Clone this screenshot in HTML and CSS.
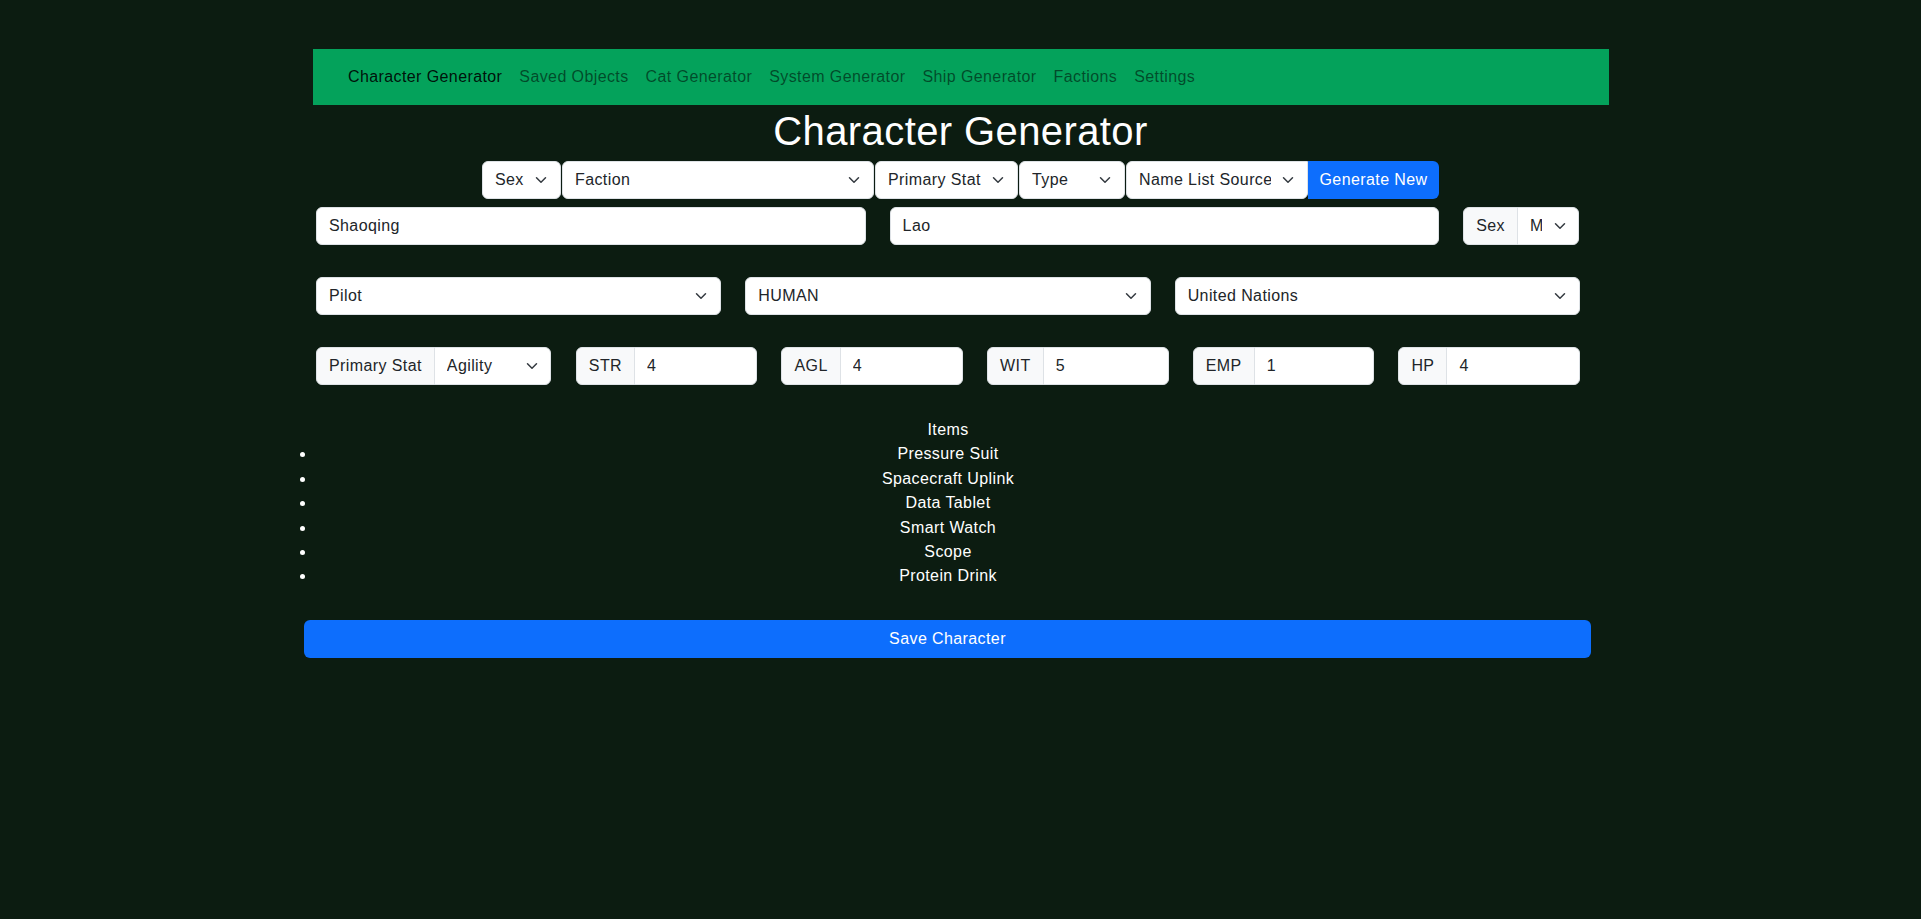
FILE: index.html
```html
<!DOCTYPE html>
<html lang="en">
<head>
    <meta charset="UTF-8">
    <title>Character Generator</title>
    <link rel="stylesheet" href="styles.css">
</head>
<body>
<svg class="defs" width="0" height="0">
    <symbol id="chev" viewBox="0 0 16 16">
        <path d="m2 5 6 6 6-6" fill="none" stroke="#343a40" stroke-width="2" stroke-linecap="round" stroke-linejoin="round"/>
    </symbol>
</svg>
<div class="container">
    <nav class="navbar">
        <a class="nav-link active" href="#">Character Generator</a>
        <a class="nav-link" href="#">Saved Objects</a>
        <a class="nav-link" href="#">Cat Generator</a>
        <a class="nav-link" href="#">System Generator</a>
        <a class="nav-link" href="#">Ship Generator</a>
        <a class="nav-link" href="#">Factions</a>
        <a class="nav-link" href="#">Settings</a>
    </nav>

    <h1 class="title">Character Generator</h1>

    <div class="toolbar">
        <span class="select-wrap w-sex">
            <select><option>Sex</option></select>
            <svg class="chev"><use href="#chev"/></svg>
        </span>
        <span class="select-wrap w-faction">
            <select><option>Faction</option></select>
            <svg class="chev"><use href="#chev"/></svg>
        </span>
        <span class="select-wrap w-primary">
            <select><option>Primary Stat</option></select>
            <svg class="chev"><use href="#chev"/></svg>
        </span>
        <span class="select-wrap w-type">
            <select><option>Type</option></select>
            <svg class="chev"><use href="#chev"/></svg>
        </span>
        <span class="select-wrap w-names">
            <select><option>Name List Source</option></select>
            <svg class="chev"><use href="#chev"/></svg>
        </span>
        <button class="btn btn-generate">Generate New</button>
    </div>

    <div class="sheet">
        <div class="row names">
            <input class="field" type="text" value="Shaoqing">
            <input class="field" type="text" value="Lao">
            <div class="group">
                <span class="group-label">Sex</span>
                <span class="select-wrap w-m">
                    <select><option>M</option><option>F</option></select>
                    <svg class="chev"><use href="#chev"/></svg>
                </span>
            </div>
        </div>

        <div class="row thirds">
            <span class="select-wrap">
                <select><option>Pilot</option></select>
                <svg class="chev"><use href="#chev"/></svg>
            </span>
            <span class="select-wrap">
                <select><option>HUMAN</option></select>
                <svg class="chev"><use href="#chev"/></svg>
            </span>
            <span class="select-wrap">
                <select><option>United Nations</option></select>
                <svg class="chev"><use href="#chev"/></svg>
            </span>
        </div>

        <div class="row stats">
            <div class="group primary">
                <span class="group-label">Primary Stat</span>
                <span class="select-wrap w-agility">
                    <select><option>Agility</option></select>
                    <svg class="chev"><use href="#chev"/></svg>
                </span>
            </div>
            <div class="group">
                <span class="group-label">STR</span>
                <input class="field" type="text" value="4">
            </div>
            <div class="group">
                <span class="group-label">AGL</span>
                <input class="field" type="text" value="4">
            </div>
            <div class="group">
                <span class="group-label">WIT</span>
                <input class="field" type="text" value="5">
            </div>
            <div class="group">
                <span class="group-label">EMP</span>
                <input class="field" type="text" value="1">
            </div>
            <div class="group">
                <span class="group-label">HP</span>
                <input class="field" type="text" value="4">
            </div>
        </div>

        <div class="items">
            <div class="items-title">Items</div>
            <ul>
                <li>Pressure Suit</li>
                <li>Spacecraft Uplink</li>
                <li>Data Tablet</li>
                <li>Smart Watch</li>
                <li>Scope</li>
                <li>Protein Drink</li>
            </ul>
        </div>
    </div>

    <div class="save-row">
        <button class="btn btn-save">Save Character</button>
    </div>
</div>
</body>
</html>
```

FILE: styles.css
```css
html, body {
    margin: 0;
    padding: 0;
    background: #0c1c11;
}
body {
    min-height: 919px;
    font-family: "Liberation Sans", Arial, sans-serif;
    font-size: 16px;
    line-height: 24px;
    letter-spacing: 0.025em;
    color: #212529;
}
.defs {
    position: absolute;
}
.container {
    width: 1296px;
    margin: 0 auto;
    padding-top: 49px;
}

/* top nav */
.navbar {
    display: flex;
    background: #04a25b;
    padding: 16px 27px;
}
.nav-link {
    padding: 0 8.5px;
    color: rgba(0, 0, 0, .55);
    text-decoration: none;
}
.nav-link.active {
    color: rgba(0, 0, 0, .9);
}

.title {
    margin: 0 0 6px;
    padding-top: 2px;
    font-size: 40px;
    line-height: 48px;
    font-weight: 400;
    color: #fff;
    text-align: center;
}

/* controls */
select, input, button {
    font-family: inherit;
    font-size: 16px;
    line-height: 24px;
    letter-spacing: inherit;
}
.select-wrap {
    position: relative;
    display: block;
}
.select-wrap select {
    display: block;
    width: 100%;
    height: 38px;
    padding: 6px 36px 6px 12px;
    border: 1px solid #dee2e6;
    border-radius: 6px;
    background: #fff;
    color: #212529;
    -webkit-appearance: none;
    appearance: none;
    outline: none;
}
.chev {
    position: absolute;
    right: 12px;
    top: 13px;
    width: 16px;
    height: 12px;
    pointer-events: none;
}
.field {
    display: block;
    box-sizing: border-box;
    height: 38px;
    min-width: 0;
    padding: 6px 12px;
    border: 1px solid #dee2e6;
    border-radius: 6px;
    background: #fff;
    color: #212529;
    outline: none;
}
.btn {
    border: 0;
    color: #fff;
    background: #0d6efd;
    white-space: nowrap;
    cursor: pointer;
}

.toolbar {
    display: flex;
    justify-content: center;
    gap: 1px;
    margin-bottom: 8px;
}
.w-sex { width: 79px; }
.w-faction { width: 312px; }
.w-primary { width: 143px; }
.w-type { width: 106px; }
.w-names { width: 182px; }
.w-names select { border-radius: 6px 0 6px 6px; }
.w-m { width: 62px; }
.w-agility { width: 117px; }
.btn-generate {
    flex: none;
    height: 38px;
    width: 131px;
    margin-left: -1px;
    padding: 6px 0;
    border-radius: 0 6px 6px 0;
}

/* form body */
.sheet {
    width: 1264px;
    margin-left: 3.5px;
}
.row {
    display: flex;
    gap: 24px;
    margin-bottom: 32px;
}
.names .field {
    flex: 1 1 0;
}
.thirds .select-wrap {
    flex: 1 1 0;
}
.stats {
    margin-bottom: 33px;
}
.group {
    display: flex;
    flex: 1 1 0;
    min-width: 0;
}
.names .group,
.stats .group.primary {
    flex: none;
}
.group-label {
    box-sizing: border-box;
    height: 38px;
    padding: 6px 12px;
    border: 1px solid #dee2e6;
    border-radius: 6px 0 0 6px;
    background: #f8f9fa;
    color: #212529;
    white-space: nowrap;
}
.group .field,
.group .select-wrap select {
    margin-left: -1px;
    border-radius: 0 6px 6px 0;
}
.group .field {
    flex: 1 1 0;
    width: 100%;
}

.items {
    color: #fff;
    text-align: center;
    line-height: 24.4px;
    margin-bottom: 31px;
}
.items ul {
    margin: 0;
    padding: 0;
    list-style: disc outside;
}

.save-row {
    width: 1287px;
    margin-left: -8.5px;
}
.btn-save {
    display: block;
    width: 100%;
    height: 38px;
    padding: 6px 12px;
    border-radius: 6px;
}
```
